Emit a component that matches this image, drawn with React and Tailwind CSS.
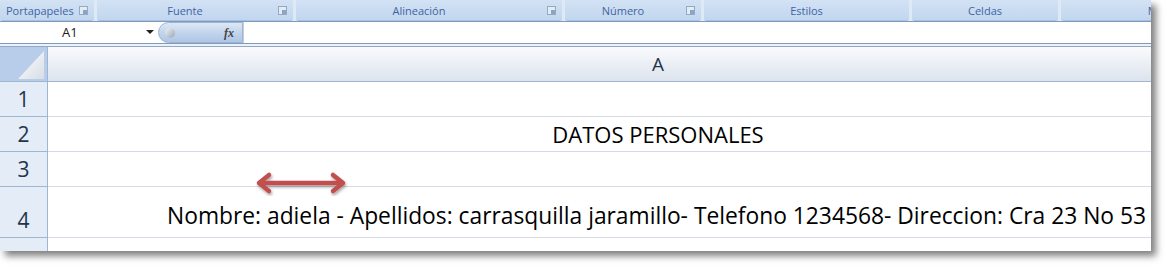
import React from "react";

const groups = [
    { label: "Portapapeles", w: "w-[94px]", launcher: true, align: "justify-start pl-[6px]" },
    { label: "Fuente", w: "w-[196px]", launcher: true },
    { label: "Alineación", w: "w-[266px]", launcher: true },
    { label: "Número", w: "w-[136px]", launcher: true },
    { label: "Estilos", w: "w-[205px]" },
    { label: "Celdas", w: "w-[146px]" },
    { label: "Modificar", w: "w-[222px]" },
];

function Launcher() {
    return (
        <span className="absolute right-[6px] top-[6px] w-[9px] h-[9px] border border-[#93a9c6] bg-[#e3ebf5] flex items-end justify-end">
            <span className="w-[4px] h-[4px] bg-[#8ea3bf]" />
        </span>
    );
}

function RibbonLabels() {
    return (
        <div className="flex h-[21px] gap-[3px] bg-[#dfe9f5] overflow-hidden">
            {groups.map((g, i) => (
                <div
                    key={i}
                    className={`relative shrink-0 ${g.w} h-full rounded-b-[3px] bg-gradient-to-b from-[#d3e2f4] to-[#c1d6ef] border-b border-[#a9c0de] flex items-center ${g.align || (g.launcher ? "justify-center pr-[20px]" : "justify-center")}`}
                >
                    <span className="text-[11px] text-[#3f64a3] leading-none">
                        {g.label}
                    </span>
                    {g.launcher && <Launcher />}
                </div>
            ))}
        </div>
    );
}

function FormulaBar() {
    return (
        <div className="flex h-[23px] border-t border-b border-[#7d9bbd] bg-white">
            <div className="w-[158px] shrink-0 flex items-center relative">
                <span className="pl-[62px] text-[13px] text-[#1b1b1b]">A1</span>
                <span className="absolute left-[146px] top-[8px] w-0 h-0 border-l-[4px] border-r-[4px] border-t-[4px] border-l-transparent border-r-transparent border-t-[#222]" />
            </div>
            <div className="w-[85px] shrink-0 h-[21px] rounded-l-full bg-gradient-to-b from-[#dde8f5] via-[#c3d5ec] to-[#aec6e4] border border-[#9db4d3] flex items-center justify-between px-[6px]">
                <span className="w-[10px] h-[10px] rounded-full bg-gradient-to-br from-[#f2f4f7] to-[#9aa6b4]" />
                <span className="text-[12px] italic font-bold text-[#444] pr-[2px]" style={{ fontFamily: "'Liberation Serif', serif" }}>
                    fx
                </span>
            </div>
            <div className="flex-1 border-l border-[#c3cfdf]" />
        </div>
    );
}

function RowHead({ n, h, end }) {
    return (
        <div className={`w-[48px] shrink-0 ${h} bg-[#e4ecf7] border-r border-b border-[#9eb6ce] flex justify-center ${end ? "items-end pb-[6px]" : "items-center"}`}>
            <span className="text-[21px] leading-none text-[#23354a]">{n}</span>
        </div>
    );
}

export default function App() {
    return (
        <div className="w-[1168px] h-[268px] bg-white overflow-hidden" style={{ fontFamily: "'Open Sans', 'Noto Sans', sans-serif" }}>
            <div className="relative w-[1151px] h-[251px] bg-white shadow-[5px_5px_7px_rgba(0,0,0,0.5)] overflow-hidden">
                <RibbonLabels />
                <FormulaBar />
                <div className="h-[3px] bg-[#eef2f8] border-b border-[#8ea8c6]" />

                {/* column header */}
                <div className="flex h-[35px]">
                    <div className="relative w-[48px] shrink-0 h-full bg-[#b8cdea] border-r border-b border-[#9eb6ce]">
                        <svg className="absolute inset-0" width="48" height="35" viewBox="0 0 48 35">
                            <defs>
                                <linearGradient id="tri" x1="0" y1="0" x2="1" y2="1">
                                    <stop offset="0" stopColor="#ffffff" />
                                    <stop offset="1" stopColor="#d7dde6" />
                                </linearGradient>
                            </defs>
                            <polygon points="18,32 44,4 44,32" fill="url(#tri)" />
                        </svg>
                    </div>
                    <div className="w-[1220px] shrink-0 h-full bg-gradient-to-b from-[#f9fafc] to-[#dde4ee] border-b border-[#9eb6ce] flex items-center justify-center">
                        <span className="text-[19px] text-[#27354a]">A</span>
                    </div>
                </div>

                {/* rows */}
                <div className="flex">
                    <RowHead n="1" h="h-[35px]" />
                    <div className="w-[1220px] shrink-0 h-[35px] border-b border-[#d4dbe6]" />
                </div>
                <div className="flex">
                    <RowHead n="2" h="h-[35px]" />
                    <div className="w-[1220px] shrink-0 h-[35px] border-b border-[#d4dbe6] flex items-center justify-center">
                        <span className="text-[22px] text-black">DATOS PERSONALES</span>
                    </div>
                </div>
                <div className="flex">
                    <RowHead n="3" h="h-[35px]" />
                    <div className="w-[1220px] shrink-0 h-[35px] border-b border-[#d4dbe6]" />
                </div>
                <div className="flex">
                    <RowHead n="4" h="h-[51px]" end />
                    <div className="w-[1220px] shrink-0 h-[51px] border-b border-[#d4dbe6] flex items-end pb-[9px] pl-[119px]">
                        <span className="text-[22.8px] leading-none text-black whitespace-nowrap">
                            Nombre: adiela - Apellidos: carrasquilla jaramillo- Telefono 1234568- Direccion: Cra 23 No 53
                        </span>
                    </div>
                </div>
                <div className="flex">
                    <RowHead n="" h="h-[35px]" />
                    <div className="w-[1220px] shrink-0 h-[35px] border-b border-[#d4dbe6]" />
                </div>

                {/* red double arrow */}
                <svg className="absolute left-[252px] top-[172px]" width="100" height="24" viewBox="0 0 100 24">
                    <defs>
                        <filter id="sh" x="-10%" y="-30%" width="130%" height="180%">
                            <feDropShadow dx="1" dy="2" stdDeviation="1.5" floodColor="#000" floodOpacity="0.35" />
                        </filter>
                    </defs>
                    <g filter="url(#sh)" stroke="#c0504d" strokeWidth="4.5" strokeLinecap="round" strokeLinejoin="round" fill="none">
                        <line x1="8" y1="11" x2="90" y2="11" />
                        <polyline points="17,3 7,11 17,19" />
                        <polyline points="81,3 91,11 81,19" />
                    </g>
                </svg>
            </div>
        </div>
    );
}
